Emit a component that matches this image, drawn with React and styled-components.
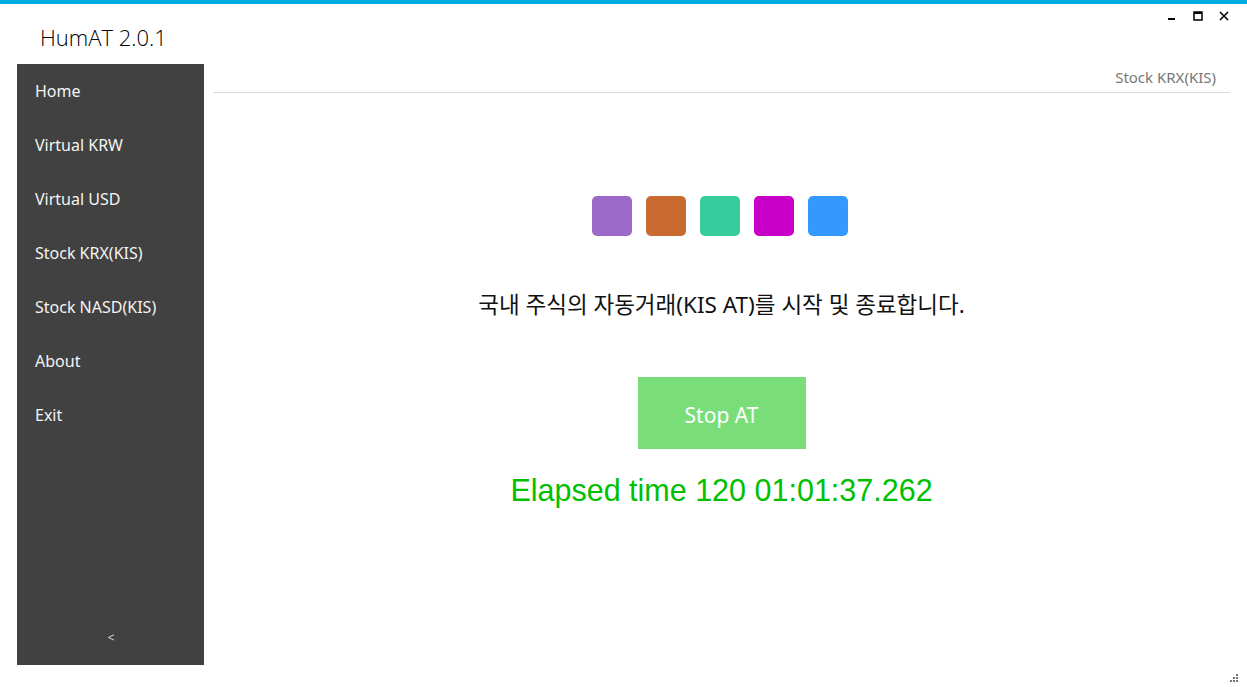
import styled, { createGlobalStyle } from "styled-components";

const Global = createGlobalStyle`
  html, body { margin: 0; padding: 0; background: #fff; }
  body { font-family: "Noto Sans", "Noto Sans CJK KR", sans-serif; }
  * { box-sizing: border-box; }
`;

const menu = ["Home", "Virtual KRW", "Virtual USD", "Stock KRX(KIS)", "Stock NASD(KIS)", "About", "Exit"];
const tiles = ["#9b69c9", "#c96b31", "#37cc9b", "#c800c8", "#3399ff"];

export default function App() {
  return (
    <Window>
      <Global />
      <Accent />
      <TitleRow>
        <Title>HumAT 2.0.1</Title>
        <Controls>
          <Ctrl>
            <svg width="10" height="10" viewBox="0 0 10 10"><rect x="1" y="7" width="7" height="2" fill="#000" /></svg>
          </Ctrl>
          <Ctrl>
            <svg width="10" height="10" viewBox="0 0 10 10"><rect x="1" y="1" width="8" height="8" fill="none" stroke="#000" strokeWidth="1.5" /><rect x="1" y="1" width="8" height="2" fill="#000" /></svg>
          </Ctrl>
          <Ctrl>
            <svg width="10" height="10" viewBox="0 0 10 10"><path d="M1 1 L9 9 M9 1 L1 9" stroke="#000" strokeWidth="1.6" /></svg>
          </Ctrl>
        </Controls>
      </TitleRow>
      <Body>
        <Sidebar>
          <Menu>
            {menu.map((m) => (
              <MenuItem key={m}>{m}</MenuItem>
            ))}
          </Menu>
          <Collapse>&lt;</Collapse>
        </Sidebar>
        <Main>
          <PageHeader>Stock KRX(KIS)</PageHeader>
          <Content>
            <Tiles>
              {tiles.map((c) => (
                <Tile key={c} $color={c} />
              ))}
            </Tiles>
            <Desc>국내 주식의 자동거래(KIS AT)를 시작 및 종료합니다.</Desc>
            <StopButton>Stop AT</StopButton>
            <Elapsed>Elapsed time 120 01:01:37.262</Elapsed>
          </Content>
        </Main>
      </Body>
      <Grip>
        <svg width="10" height="10" viewBox="0 0 10 10" fill="#777">
          <rect x="7" y="1" width="2" height="2" />
          <rect x="4" y="4" width="2" height="2" />
          <rect x="7" y="4" width="2" height="2" />
          <rect x="1" y="7" width="2" height="2" />
          <rect x="4" y="7" width="2" height="2" />
          <rect x="7" y="7" width="2" height="2" />
        </svg>
      </Grip>
    </Window>
  );
}

const Window = styled.div`
  position: relative;
  width: 1247px;
  height: 687px;
  display: flex;
  flex-direction: column;
  overflow: hidden;
`;

const Accent = styled.div`
  height: 4px;
  background: #00abe0;
`;

const TitleRow = styled.div`
  height: 60px;
  display: flex;
  justify-content: space-between;
  align-items: flex-start;
`;

const Title = styled.div`
  margin: 17px 0 0 40px;
  font-family: "Open Sans", "Noto Sans", sans-serif;
  font-weight: 300;
  font-size: 22px;
  color: #000;
  line-height: 32px;
`;

const Controls = styled.div`
  display: flex;
  gap: 6px;
  margin: 5px 13px 0 0;
`;

const Ctrl = styled.div`
  width: 20px;
  height: 14px;
  display: flex;
  align-items: center;
  justify-content: center;
`;

const Body = styled.div`
  display: flex;
  height: 601px;
`;

const Sidebar = styled.nav`
  margin-left: 17px;
  width: 187px;
  background: #414141;
  display: flex;
  flex-direction: column;
  justify-content: space-between;
`;

const Menu = styled.ul`
  list-style: none;
  margin: 0;
  padding: 14px 0 0;
`;

const MenuItem = styled.li`
  height: 54px;
  line-height: 26px;
  padding-left: 18px;
  color: #f4f4f4;
  font-size: 16px;
`;

const Collapse = styled.div`
  text-align: center;
  color: #ddd;
  font-size: 12px;
  padding-bottom: 19px;
  padding-left: 1px;
`;

const Main = styled.main`
  flex: 1;
  padding: 0 17px 0 9px;
  display: flex;
  flex-direction: column;
`;

const PageHeader = styled.div`
  height: 29px;
  border-bottom: 1px solid #dcdcdc;
  text-align: right;
  padding-right: 14px;
  color: #777;
  font-size: 15px;
  line-height: 26px;
`;

const Content = styled.section`
  display: flex;
  flex-direction: column;
  align-items: center;
  padding-top: 103px;
`;

const Tiles = styled.div`
  display: flex;
  gap: 14px;
  margin-left: -3px;
`;

const Tile = styled.div`
  width: 40px;
  height: 40px;
  border-radius: 5px;
  background: ${(p) => p.$color};
`;

const Desc = styled.p`
  margin: 53px 0 0;
  font-family: "Noto Sans", "Noto Sans CJK KR", sans-serif;
  font-size: 22.5px;
  line-height: 32px;
  color: #111;
`;

const StopButton = styled.button`
  margin-top: 56px;
  width: 168px;
  height: 72px;
  padding: 4px 0 0;
  border: none;
  background: #79de79;
  color: #fff;
  font-family: "Noto Sans", sans-serif;
  font-size: 21px;
`;

const Elapsed = styled.div`
  margin-top: 22px;
  font-family: "Liberation Sans", sans-serif;
  font-size: 30.5px;
  line-height: 38px;
  color: #00c000;
`;

const Grip = styled.div`
  position: absolute;
  right: 8px;
  bottom: 4px;
  width: 10px;
  height: 10px;
  display: flex;
`;
